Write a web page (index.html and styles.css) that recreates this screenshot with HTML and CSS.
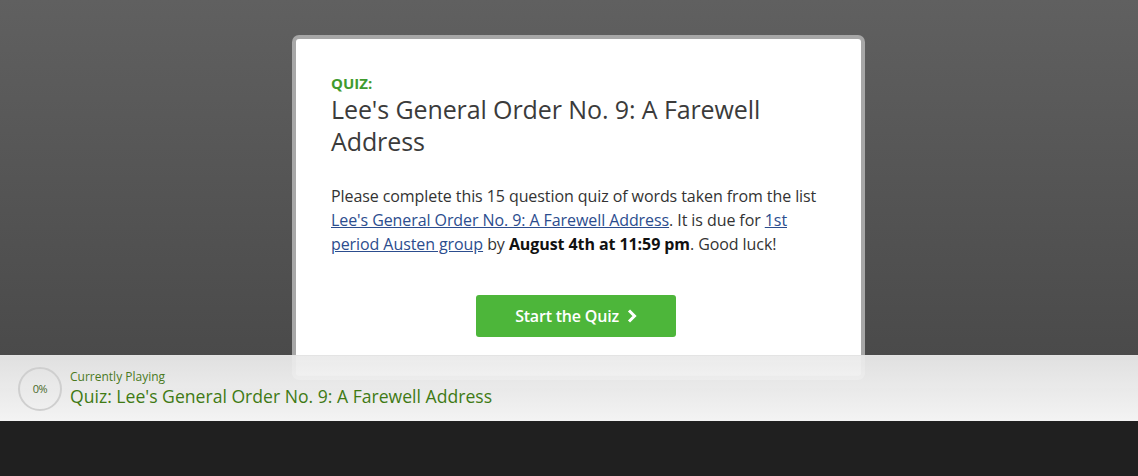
FILE: index.html
```html
<!DOCTYPE html>
<html>
<head>
<meta charset="utf-8">
<link rel="stylesheet" href="styles.css">
</head>
<body>
<div class="stage">
  <div class="card">
    <div class="card-inner">
      <div class="kicker">QUIZ:</div>
      <h1 class="title">Lee's General Order No. 9: A Farewell Address</h1>
      <p class="desc">Please complete this 15 question quiz of words taken from the list <a href="#">Lee's General Order No. 9: A Farewell Address</a>. It is due for <a href="#">1st period Austen group</a> by <b>August 4th at 11:59 pm</b>. Good luck!</p>
      <div class="actions">
        <button class="start">Start the Quiz
          <svg class="chev" width="10" height="14" viewBox="0 0 10 14"><path d="M2 1.5 L7.5 7 L2 12.5" fill="none" stroke="#fff" stroke-width="3"/></svg>
        </button>
      </div>
    </div>
  </div>
  <div class="bar">
    <div class="progress">0%</div>
    <div class="now">
      <div class="now-label">Currently Playing</div>
      <div class="now-title">Quiz: Lee's General Order No. 9: A Farewell Address</div>
    </div>
  </div>
</div>
<div class="footer"></div>
</body>
</html>
```
FILE: styles.css
```css
html, body {
  margin: 0;
  padding: 0;
}
body {
  width: 1138px;
  height: 476px;
  overflow: hidden;
  font-family: "Open Sans", "Noto Sans", sans-serif;
  background: #202020;
}
.stage {
  position: relative;
  height: 421px;
  background: linear-gradient(#606060, #4a4a4a 85%, #474747);
  padding-top: 35px;
  box-sizing: border-box;
}
.card {
  margin-left: 292px;
  width: 573px;
  height: 345px;
  box-sizing: border-box;
  background: #a7a7a7;
  border-radius: 7px;
  padding: 4px;
}
.card-inner {
  background: #fff;
  height: 100%;
  border-radius: 3px;
  box-sizing: border-box;
  padding: 34px 40px 0 35px;
}
.kicker {
  color: #3f9b2e;
  font-weight: 700;
  font-size: 15px;
  line-height: 20px;
}
.title {
  margin: 0;
  font-weight: 400;
  font-size: 25px;
  line-height: 32px;
  color: #3b3b3b;
  letter-spacing: -0.1px;
}
.desc {
  margin: 27px 0 0 0;
  font-size: 16px;
  line-height: 24px;
  color: #333;
  letter-spacing: -0.08px;
}
.desc a {
  color: #2c4d8e;
  text-decoration: underline;
}
.desc b {
  color: #111;
  font-weight: 700;
}
.actions {
  display: flex;
  justify-content: center;
  margin-top: 39px;
}
.start {
  width: 200px;
  height: 42px;
  background: #4db63a;
  border: none;
  border-radius: 3px;
  color: #fff;
  font-family: "Open Sans", sans-serif;
  font-weight: 600;
  font-size: 16px;
  letter-spacing: -0.2px;
  display: flex;
  align-items: center;
  justify-content: center;
  gap: 8px;
  padding: 0;
}
.chev {
  display: block;
}
.bar {
  position: absolute;
  left: 0;
  right: 0;
  top: 355px;
  height: 66px;
  background: linear-gradient(rgba(234,234,234,0.94), rgba(250,250,250,0.96));
  border-top: 1px solid rgba(225,225,225,0.9);
  box-sizing: border-box;
  display: flex;
  align-items: center;
  padding-left: 18px;
  gap: 8px;
}
.progress {
  width: 44px;
  height: 44px;
  box-sizing: border-box;
  border: 2px solid #cfcfcf;
  border-radius: 50%;
  display: flex;
  align-items: center;
  justify-content: center;
  font-size: 11px;
  color: #4a6a2a;
  letter-spacing: -0.5px;
}
.now {
  display: flex;
  flex-direction: column;
  margin-top: -2px;
}
.now-label {
  font-size: 12px;
  line-height: 16px;
  color: #4a7a1e;
}
.now-title {
  font-size: 17.6px;
  line-height: 22px;
  color: #3f7a14;
}
.footer {
  height: 55px;
  background: #202020;
}
```
